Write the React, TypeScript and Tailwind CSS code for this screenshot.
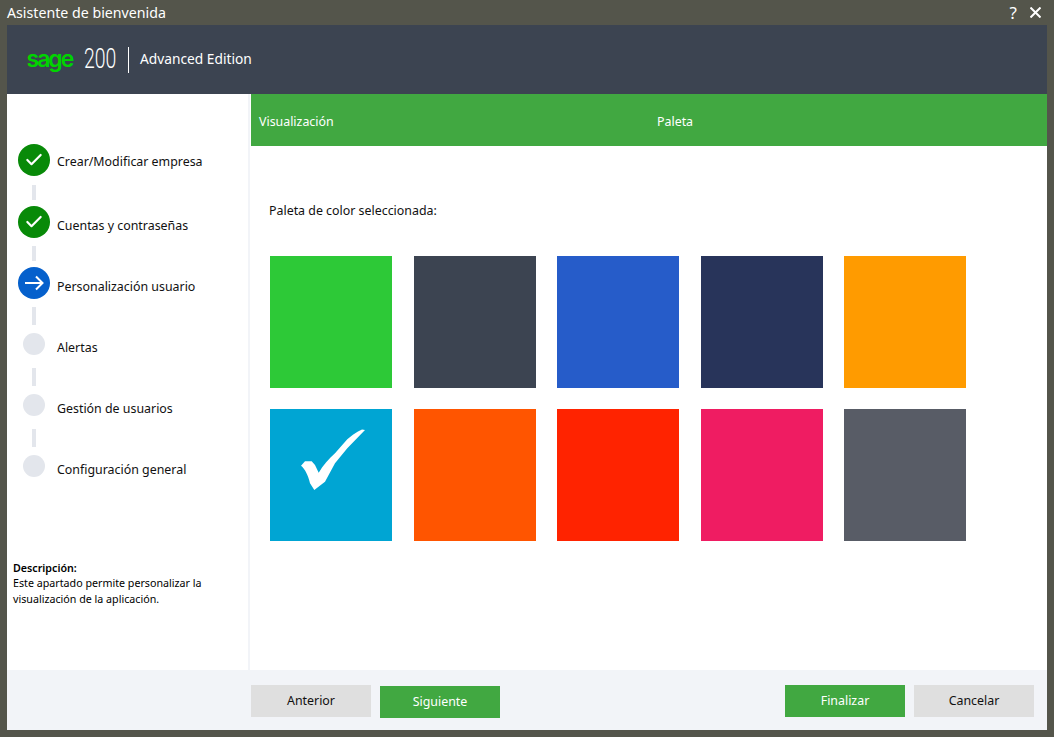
import { Check } from "lucide-react";

const UI = "font-['Noto_Sans','Open_Sans',sans-serif]";

const COLORS = ["#2dc937", "#3c4451", "#265cc9", "#28345a", "#ff9b00", "#00a5d3", "#ff5500", "#ff2300", "#ef1c62", "#585c66"];

function Swatch({ color, selected }: { color: string; selected?: boolean }) {
  return (
    <div className="h-[132px] w-[122px]" style={{ backgroundColor: color }}>
      {selected && (
        <svg viewBox="0 0 122 132" className="block h-full w-full">
          <path
            d="M31 56.7 L35 52.3 L41.7 52.3 L45 56 L48.7 63.7 C53 56 59 50 65 44.3 L77.3 30.3 C81 27 85 24 88 22.5 L92 20.5 L95 21 L77.3 39.3 L65 54.3 L55 72.7 L44.3 81 L40 74.3 C38 66 35 60 31 56.7 Z"
            fill="#fff"
          />
        </svg>
      )}
    </div>
  );
}

function Step({ state, label, high }: { state: "done" | "current" | "todo"; label: string; high?: boolean }) {
  return (
    <div className="flex h-8 items-center">
      <div className="flex w-8 justify-center">
        {state === "done" && (
          <div className="flex h-8 w-8 items-center justify-center rounded-full bg-[#088a08] text-white">
            <Check size={20} strokeWidth={2.6} />
          </div>
        )}
        {state === "current" && (
          <div className="flex h-8 w-8 items-center justify-center rounded-full bg-[#0560cc]">
            <svg width="20" height="16" viewBox="0 0 20 16" fill="none" stroke="#fff" strokeWidth="2">
              <path d="M1 8 H18.5 M12 1.5 L18.5 8 L12 14.5" />
            </svg>
          </div>
        )}
        {state === "todo" && <div className="h-[22px] w-[22px] rounded-full bg-[#e3e6ec]" />}
      </div>
      <span className={`ml-[7px] text-[12.4px] text-[#111] ${high ? "pt-1" : "pt-2"}`}>{label}</span>
    </div>
  );
}

function Btn({ label, green, className }: { label: string; green?: boolean; className?: string }) {
  return (
    <button
      className={`h-8 w-[120px] text-[12.4px] ${green ? "bg-[#41a841] text-white" : "bg-[#dfdfdf] text-[#111]"} ${className ?? ""}`}
    >
      {label}
    </button>
  );
}

export default function App() {
  return (
    <div className={`flex h-[737px] w-[1054px] flex-col overflow-hidden bg-[#54554b] ${UI}`}>
      <div className="flex h-[25px] shrink-0 items-center justify-between pl-[7px] pr-[13px]">
        <span className="text-[14.2px] text-white">Asistente de bienvenida</span>
        <div className="flex items-center gap-[13px]">
          <span className="text-[17px] leading-none text-white">?</span>
          <svg width="11" height="11" viewBox="0 0 11 11" stroke="#fff" strokeWidth="2">
            <path d="M0.5 0.5 L10.5 10.5 M10.5 0.5 L0.5 10.5" />
          </svg>
        </div>
      </div>

      <div className="mx-[7px] mb-[7px] flex flex-1 flex-col">
        <div className="flex h-[69px] shrink-0 items-center bg-[#3c4451] pl-[19.5px]">
          <span className="w-[57.5px] font-['Inter',sans-serif] text-[23px] font-semibold leading-none tracking-[-2px] text-[#00d400]">sage</span>
          <span className="w-11 origin-left scale-x-[0.72] font-['Roboto',sans-serif] text-[27px] font-light leading-none text-white">200</span>
          <div className="h-[26px] w-px bg-white" />
          <span className="ml-[11px] text-[13.75px] text-white">Advanced Edition</span>
        </div>

        <div className="flex flex-1">
          <div className="flex w-[243px] shrink-0 flex-col border-r-2 border-[#f2f4f8] bg-white">
            <div className="flex flex-col pl-[11px] pt-[50px]">
              <Step state="done" label="Crear/Modificar empresa" high />
              <div className="ml-[14px] mb-[6px] mt-[9px] h-[15px] w-1 bg-[#e3e6ec]" />
              <Step state="done" label="Cuentas y contraseñas" />
              <div className="ml-[14px] mb-[6px] mt-2 h-[15px] w-1 bg-[#e3e6ec]" />
              <Step state="current" label="Personalización usuario" />
              <div className="ml-[14px] mb-[3px] mt-2 h-[18px] w-1 bg-[#e3e6ec]" />
              <Step state="todo" label="Alertas" />
              <div className="ml-[14px] mb-[3px] mt-2 h-[18px] w-1 bg-[#e3e6ec]" />
              <Step state="todo" label="Gestión de usuarios" />
              <div className="ml-[14px] mb-[3px] mt-2 h-[18px] w-1 bg-[#e3e6ec]" />
              <Step state="todo" label="Configuración general" />
            </div>
            <div className="mt-auto pb-[63px] pl-[6px] text-[10.7px] leading-[15.5px] text-black">
              <p className="font-semibold">Descripción:</p>
              <p>Este apartado permite personalizar la</p>
              <p>visualización de la aplicación.</p>
            </div>
          </div>

          <div className="flex flex-1 flex-col bg-white pl-px">
            <div className="flex h-[52px] shrink-0 items-center bg-[#41a841] pl-2 pt-1 text-[12.4px] text-white">
              <span className="w-[398px]">Visualización</span>
              <span>Paleta</span>
            </div>
            <p className="mt-[56px] pl-[18px] text-[12.4px] leading-[17px] text-[#111]">Paleta de color seleccionada:</p>
            <div className="mt-[37px] grid grid-cols-[repeat(5,122px)] gap-x-[21.5px] gap-y-[21px] pl-[19px]">
              {COLORS.map((c, i) => (
                <Swatch key={c} color={c} selected={i === 5} />
              ))}
            </div>
          </div>
        </div>

        <div className="flex h-[60px] shrink-0 items-start bg-[#f2f4f8] pl-[244px] pr-[13px] pt-[15px]">
          <Btn label="Anterior" />
          <Btn label="Siguiente" green className="ml-[9px] mt-px" />
          <Btn label="Finalizar" green className="ml-auto" />
          <Btn label="Cancelar" className="ml-[9px]" />
        </div>
      </div>
    </div>
  );
}
